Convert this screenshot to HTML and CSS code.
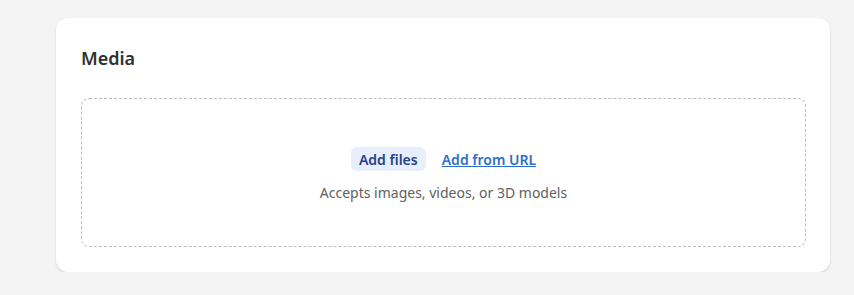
FILE: index.html
```html
<!DOCTYPE html>
<html lang="en">
<head>
  <meta charset="UTF-8" />
  <meta name="viewport" content="width=device-width, initial-scale=1.0"/>
  <title>Media</title>
  <link rel="stylesheet" href="styles.css">
</head>
<body>
  <div class="card">
    <h2 class="card-title">Media</h2>

    <div class="dropzone">
      <div class="drop-actions">
        <button class="add-button">Add files</button>
        <a href="#" class="url-link">Add from URL</a>
      </div>
      <div class="drop-hint">Accepts images, videos, or 3D models</div>
    </div>
  </div>
</body>
</html>
```

FILE: styles.css
```css
* { box-sizing: border-box; margin: 0; padding: 0; }
body {
  font-family: "Noto Sans", "Open Sans", Arial, sans-serif;
  background-color: #f4f4f4;
  padding: 18px 24px 0 56px;
  color: #303030;
}
.card {
  background-color: #fff;
  border-radius: 12px;
  padding: 28px 24px 25px 25px;
  box-shadow: 0 1px 2px rgba(0, 0, 0, 0.12), 0 2px 4px rgba(0, 0, 0, 0.04);
}
.card-title {
  font-size: 18px;
  line-height: 24px;
  font-weight: 600;
  color: #303030;
  margin-bottom: 28px;
}
.dropzone {
  height: 149px;
  border: 1px dashed #bdbdbd;
  border-radius: 8px;
  display: flex;
  flex-direction: column;
  align-items: center;
  justify-content: center;
  gap: 12px;
  padding-top: 4px;
}
.drop-actions {
  display: flex;
  align-items: center;
  gap: 16px;
}
.add-button {
  font-family: inherit;
  font-size: 14px;
  font-weight: 600;
  color: #26418c;
  background-color: #e8eefb;
  border: none;
  border-radius: 6px;
  height: 24px;
  padding: 0 8px;
  cursor: pointer;
}
.url-link {
  font-size: 14px;
  font-weight: 600;
  color: #2c6ecb;
  text-decoration: underline;
}
.drop-hint {
  font-size: 14px;
  color: #616161;
}
```
